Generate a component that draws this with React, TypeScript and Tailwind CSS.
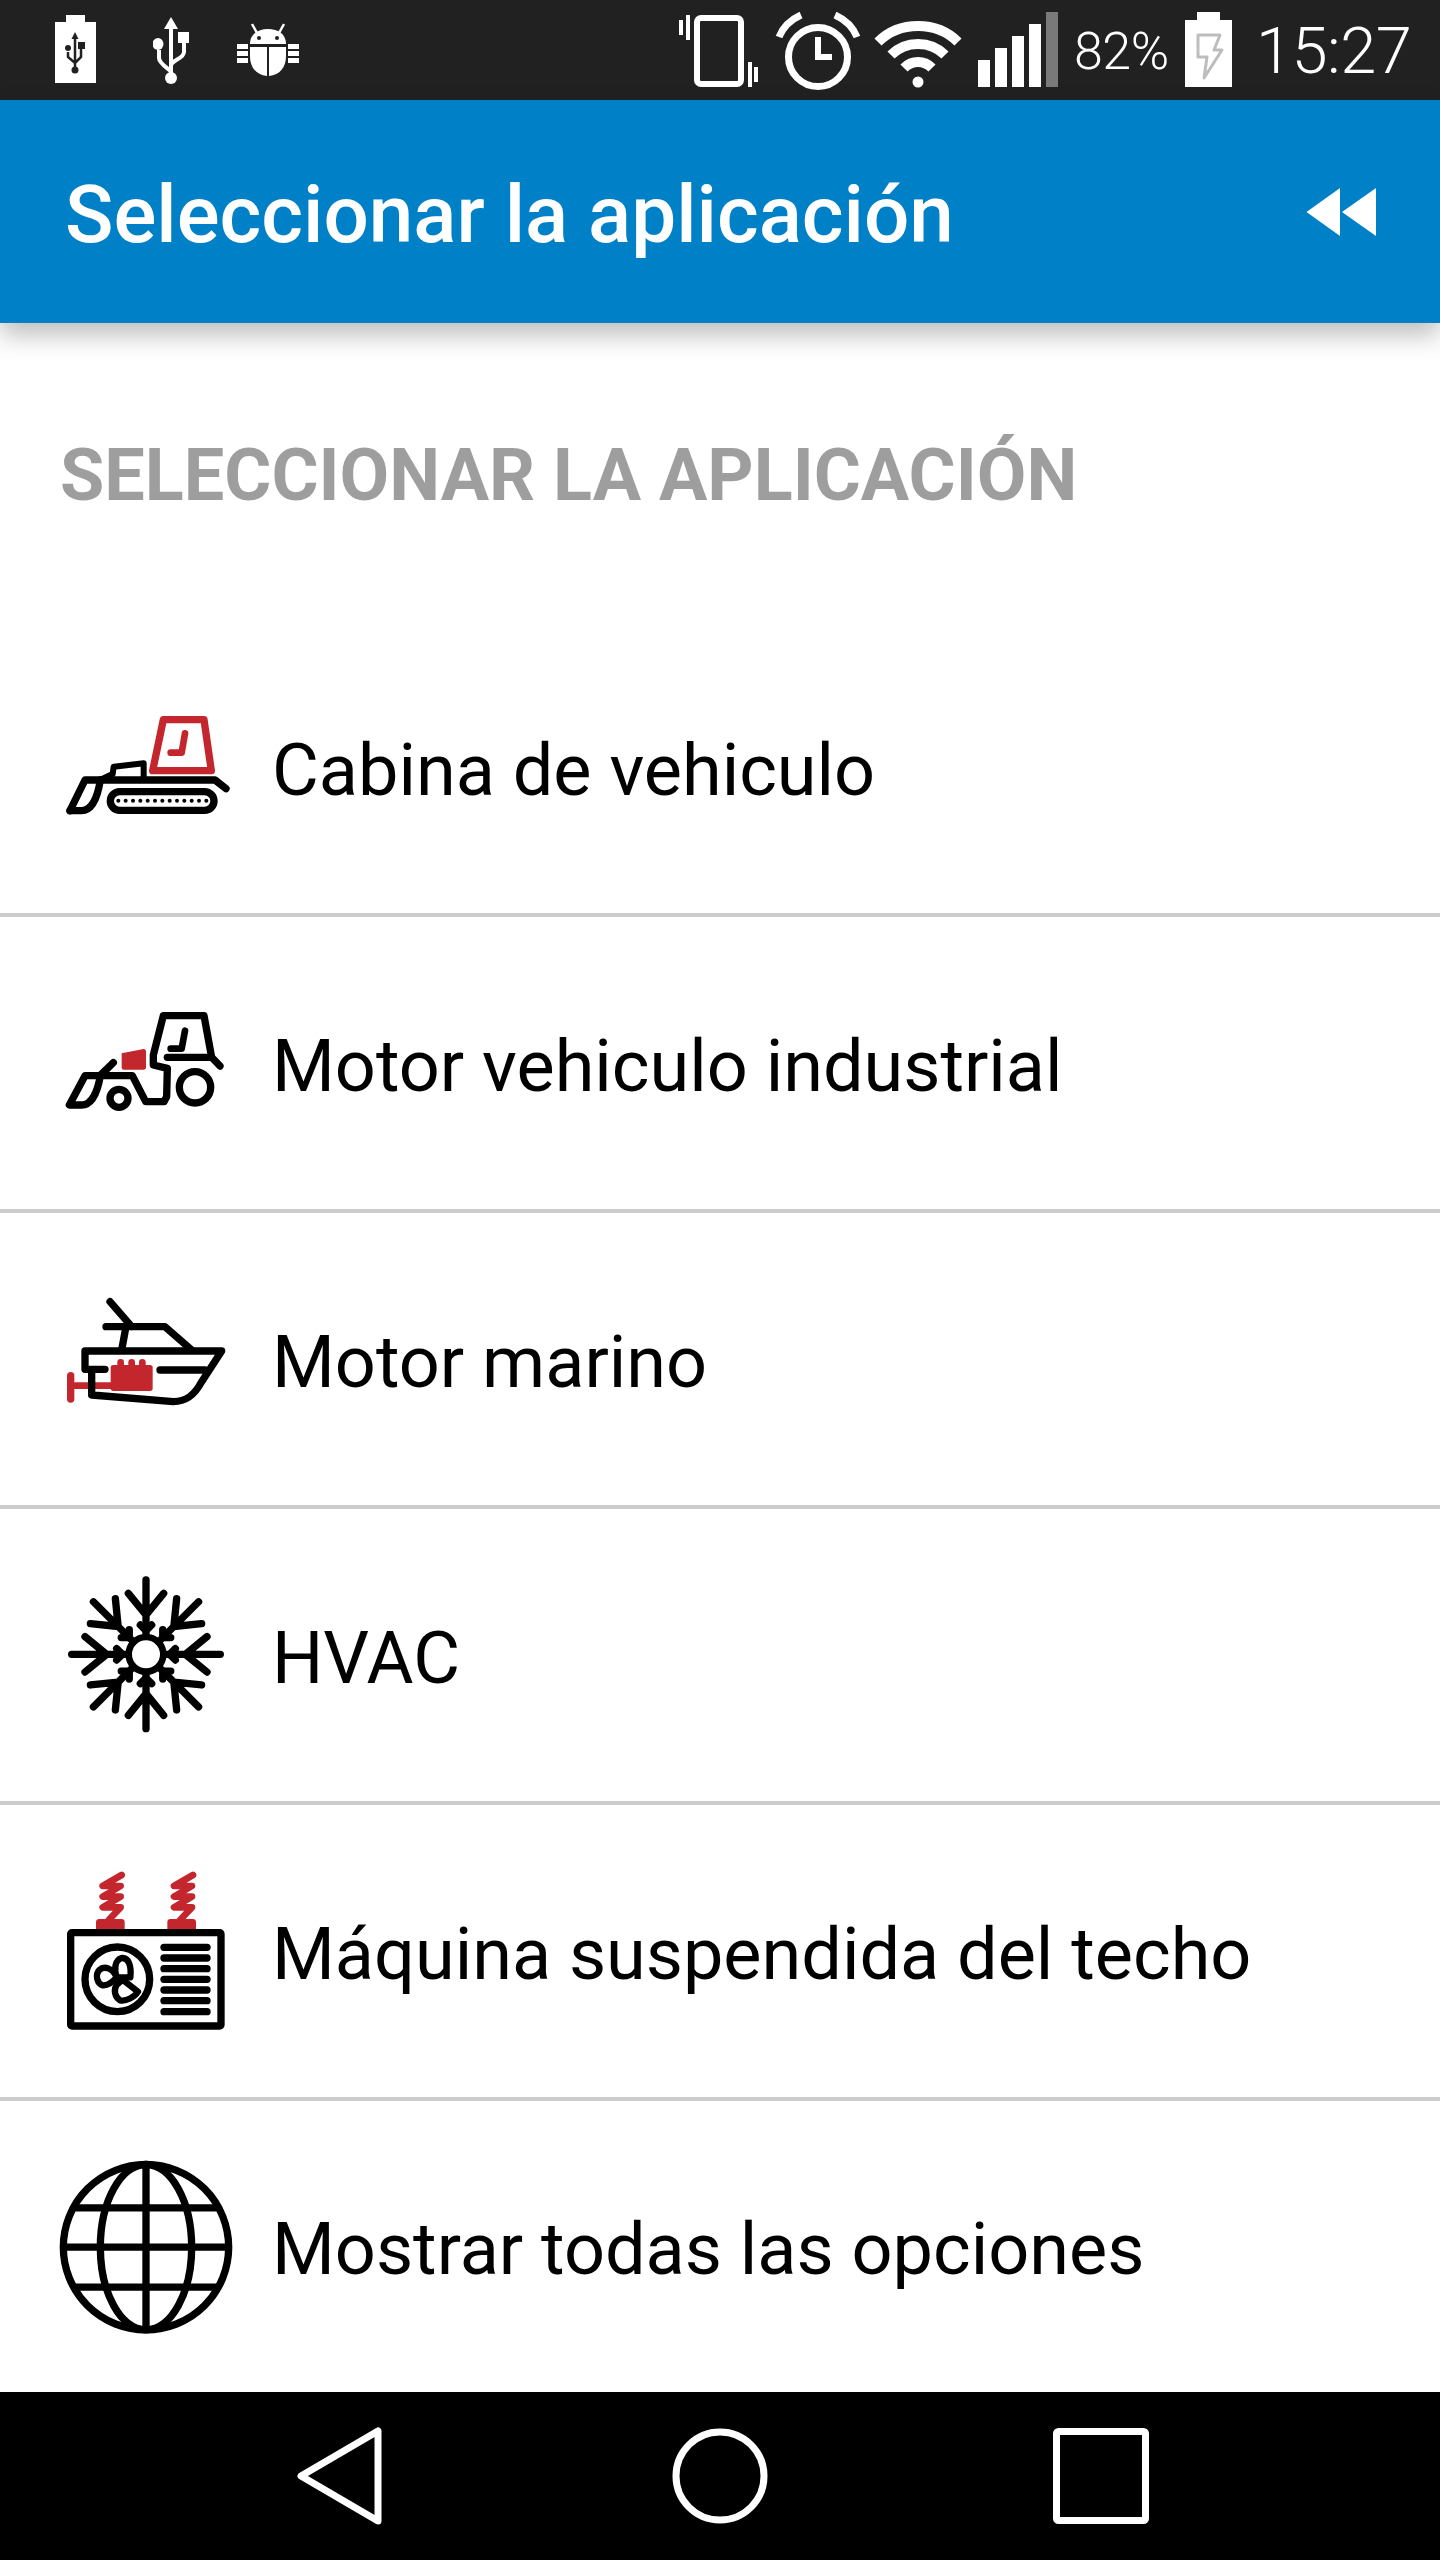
const ROBOTO = "font-['Roboto',sans-serif]";

function StatusIcon({ x, w, children }: { x: number; w: number; children: React.ReactNode }) {
  return (
    <svg width={w} height={100} viewBox={`${x} 0 ${w} 100`} className="shrink-0">
      {children}
    </svg>
  );
}

function StatusBar() {
  return (
    <div className="flex h-[100px] shrink-0 items-center justify-between bg-[#212121] pl-[55px] pr-[30px]">
      <div className="flex">
        <StatusIcon x={55} w={41}>
          <path d="M66 15h19v7h11v61H55V22h11z" fill="#fff" />
          <g fill="none" stroke="#212121" strokeWidth="2.5">
            <path d="M75 36v34M68 52v5l7 6 6-6v-8" />
          </g>
          <path d="M75 32l-3.5 7h7z" fill="#212121" />
          <circle cx="75" cy="70" r="3.5" fill="#212121" />
          <circle cx="68" cy="48" r="3" fill="#212121" />
          <rect x="78" y="42" width="7" height="7" fill="#212121" />
        </StatusIcon>
        <div className="ml-[57px]">
          <StatusIcon x={153} w={36}>
            <g fill="none" stroke="#fff" strokeWidth="4">
              <path d="M171 28v50M159 50v8c0 6 12 12 12 14M184 42v10c0 7-13 8-13 14" />
            </g>
            <path d="M171 17l-7 12h14z" fill="#fff" />
            <circle cx="171" cy="78" r="6" fill="#fff" />
            <ellipse cx="158" cy="44" rx="5.5" ry="6" fill="#fff" />
            <rect x="178" y="32" width="11" height="11" fill="#fff" />
          </StatusIcon>
        </div>
        <div className="ml-[48px]">
          <StatusIcon x={237} w={62}>
            <path d="M250 44c0-10 8-15 18-15s18 5 18 15z" fill="#fff" />
            <path d="M252 24l5 9M284 24l-5 9" stroke="#fff" strokeWidth="2.5" />
            <circle cx="259" cy="38" r="2" fill="#212121" />
            <circle cx="277" cy="38" r="2" fill="#212121" />
            <path d="M250 47h17v29c-11-1-17-9-17-20zM269 47h17v9c0 11-6 19-17 20z" fill="#fff" />
            <g fill="#fff">
              <rect x="237" y="44" width="11" height="5" />
              <rect x="237" y="51" width="11" height="5" />
              <rect x="237" y="58" width="11" height="5" />
              <rect x="288" y="44" width="11" height="5" />
              <rect x="288" y="51" width="11" height="5" />
              <rect x="288" y="58" width="11" height="5" />
            </g>
          </StatusIcon>
        </div>
      </div>
      <div className="flex items-center">
        <StatusIcon x={679} w={80}>
          <rect x="697" y="18" width="44" height="66" rx="4" fill="none" stroke="#fff" strokeWidth="6" />
          <g fill="#fff">
            <rect x="679" y="20" width="4" height="15" />
            <rect x="686" y="15" width="4" height="25" />
            <rect x="748" y="62" width="4" height="25" />
            <rect x="754" y="67" width="4" height="15" />
          </g>
        </StatusIcon>
        <div className="ml-[16px]">
          <StatusIcon x={775} w={86}>
            <circle cx="818" cy="57" r="29.5" fill="none" stroke="#fff" strokeWidth="7" />
            <path d="M818 37v20h14" fill="none" stroke="#fff" strokeWidth="6" />
            <path d="M779 37c4-10 11-17 22-22M857 37c-4-10-11-17-22-22" fill="none" stroke="#fff" strokeWidth="7" />
          </StatusIcon>
        </div>
        <div className="ml-[13px]">
          <StatusIcon x={874} w={88}>
            <g fill="none" stroke="#fff" strokeWidth="10">
              <path d="M878 42c10-10 24-16 40-16s30 6 40 16" />
              <path d="M891 55c7-7 16-11 27-11s20 4 27 11" />
              <path d="M904 68c4-4 9-6 14-6s10 2 14 6" />
            </g>
            <circle cx="918" cy="82" r="5.5" fill="#fff" />
          </StatusIcon>
        </div>
        <div className="ml-[16px]">
          <StatusIcon x={978} w={80}>
            <g fill="#fff">
              <rect x="978" y="60" width="12" height="27" />
              <rect x="995" y="48" width="12" height="39" />
              <rect x="1012" y="36" width="12" height="51" />
              <rect x="1029" y="24" width="12" height="63" />
            </g>
            <rect x="1046" y="12" width="12" height="75" fill="#7a7a7a" />
          </StatusIcon>
        </div>
        <span className={`ml-[16px] w-[92px] whitespace-nowrap pt-[3px] text-[52px] font-light leading-none tracking-[-0.5px] text-white ${ROBOTO}`}>82%</span>
        <div className="ml-[19px]">
          <StatusIcon x={1185} w={47}>
            <path d="M1197 12h23v8h12v67h-47V20h12z" fill="#fff" />
            <path d="M1198 35h22l-6 15h8l-18 28 3-21h-9z" fill="none" stroke="#bdbdbd" strokeWidth="3" strokeLinejoin="round" />
          </StatusIcon>
        </div>
        <span className={`ml-[24px] w-[154px] whitespace-nowrap pt-[3px] text-[65px] font-light leading-none tracking-[-0.5px] text-white ${ROBOTO}`}>15:27</span>
      </div>
    </div>
  );
}

function Header() {
  return (
    <header className="relative z-10 flex h-[223px] shrink-0 items-center justify-between bg-[#0080c6] pl-[65px] pr-[64px] shadow-[0_12px_24px_rgba(0,0,0,0.26)]">
      <h1 className={`pt-[6px] text-[80px] font-medium leading-none text-white ${ROBOTO}`}>Seleccionar la aplicación</h1>
      <svg width="70" height="48" viewBox="0 0 70 48" className="shrink-0">
        <path d="M34 0v48L0.5 24zM70 0v48L36 24z" fill="#fff" />
      </svg>
    </header>
  );
}

const STROKE = { fill: "none", stroke: "#000", strokeWidth: 22, strokeLinecap: "round", strokeLinejoin: "round" } as const;
const RED = "#c4262e";

function IconBox({ x = 0, y, children }: { x?: number; y: number; children: React.ReactNode }) {
  return (
    <svg width={200} height={190} viewBox={`${x} ${y} 600 570`} className="shrink-0">
      {children}
    </svg>
  );
}

function CabIcon() {
  const dots = Array.from({ length: 13 }, (_, i) => 205 + i * 22);
  return (
    <IconBox y={-84}>
      <path d="M340 59h122l22 153H308z" fill="none" stroke={RED} strokeWidth="22" strokeLinejoin="round" />
      <path d="M405 100l-10 58h-33" fill="none" stroke={RED} strokeWidth="20" strokeLinecap="round" strokeLinejoin="round" />
      <path d="M60 332l45-92h390l33 26" {...STROKE} />
      <path d="M60 332h35c30 0 48-40 56-92" {...STROKE} />
      <path d="M150 240l38-18 3-22 90-10v50" {...STROKE} strokeWidth={18} />
      <rect x="181" y="275" width="311" height="56" rx="28" {...STROKE} />
      {dots.map((cx) => (
        <circle key={cx} cx={cx} cy={302} r={6} fill="#000" />
      ))}
    </IconBox>
  );
}

function TractorIcon() {
  return (
    <IconBox y={-96}>
      <path d="M215 160l66-13c4 0 7 3 7 7v48c0 4-3 7-7 7h-60c-4 0-6-3-6-7z" fill={RED} />
      <path d="M405 92l-10 54h-33" {...STROKE} strokeWidth={20} />
      <path d="M510 198l-25-26-23-125H340l-30 118v30l42 10-2 85-8 15h-55l-40-78H105l-47 88h37c30 0 48-40 56-88" {...STROKE} />
      <path d="M152 225l38-37" {...STROKE} />
      <path d="M352 172h130" {...STROKE} />
      <circle cx="435" cy="262" r="47" {...STROKE} />
      <circle cx="207" cy="295" r="27" {...STROKE} />
    </IconBox>
  );
}

function BoatIcon() {
  return (
    <IconBox y={-63}>
      <g fill={RED}>
        <rect x="182" y="240" width="126" height="78" rx="8" />
        <rect x="202" y="222" width="20" height="40" rx="10" />
        <rect x="235" y="222" width="20" height="40" rx="10" />
        <rect x="267" y="222" width="20" height="40" rx="10" />
      </g>
      <path d="M60 302h125" fill="none" stroke={RED} strokeWidth="20" />
      <path d="M62 272v70" fill="none" stroke={RED} strokeWidth="22" strokeLinecap="round" />
      <path d="M180 50l65 75M168 125h177l80 70M228 125l-13 70" {...STROKE} />
      <path d="M165 253h-60v-55h410l-60 92c-22 42-48 60-85 60l-245-20v-77" {...STROKE} />
      <path d="M330 255h135" {...STROKE} />
    </IconBox>
  );
}

function SnowIcon() {
  return (
    <IconBox y={0}>
      <circle cx="288" cy="283" r="52" fill="none" stroke="#000" strokeWidth="20" />
      {[0, 45, 90, 135, 180, 225, 270, 315].map((a) => (
        <g key={a} transform={`rotate(${a} 288 283)`}>
          <path d="M288 60v160M235 100l53 65 53-65" {...STROKE} />
          <path d="M271 195l17 17 17-17" {...STROKE} />
        </g>
      ))}
    </IconBox>
  );
}

function UnitIcon() {
  const vents = [262, 294, 326, 358, 390, 422, 455];
  return (
    <IconBox y={-12}>
      {[0, 214].map((dx) => (
        <g key={dx} transform={`translate(${dx} 0)`}>
          <path d="M138 208v-22c0-5 4-9 9-9h68c5 0 9 4 9 9v22z" fill={RED} />
          <path d="M215 45l-57 33h54l-54 32h54l-54 32h54l-36 38" fill="none" stroke={RED} strokeWidth="20" strokeLinecap="round" strokeLinejoin="round" />
        </g>
      ))}
      <rect x="62" y="218" width="451" height="280" rx="4" fill="none" stroke="#000" strokeWidth="22" />
      <circle cx="202" cy="358" r="97" fill="none" stroke="#000" strokeWidth="22" />
      <g fill="none" stroke="#000" strokeWidth="19" strokeLinejoin="round">
        <path d="M200 352c-12-28-38-36-52-22-14 15-6 42 10 46 18 2 32-12 42-24z" />
        <path d="M200 352c-8-25-6-52 15-58 20-2 30 22 26 58z" />
        <path d="M200 375c-10 14-6 36 10 46 18 4 44-10 54-26l-46-36z" />
      </g>
      {vents.map((y) => (
        <path key={y} d={`M342 ${y}h129`} fill="none" stroke="#000" strokeWidth="22" strokeLinecap="round" />
      ))}
    </IconBox>
  );
}

function GlobeIcon() {
  return (
    <IconBox x={30} y={4.5}>
      <g fill="none" stroke="#000" strokeWidth="22">
        <circle cx="318" cy="290" r="248" />
        <ellipse cx="318" cy="290" rx="137" ry="248" />
        <path d="M318 42v496M70 290h496M100 172h436M100 410h436" />
      </g>
    </IconBox>
  );
}

const rows = [
  { icon: CabIcon, label: "Cabina de vehiculo" },
  { icon: TractorIcon, label: "Motor vehiculo industrial" },
  { icon: BoatIcon, label: "Motor marino" },
  { icon: SnowIcon, label: "HVAC" },
  { icon: UnitIcon, label: "Máquina suspendida del techo" },
  { icon: GlobeIcon, label: "Mostrar todas las opciones" },
];

function NavBar() {
  return (
    <nav className="flex h-[168px] shrink-0 items-center bg-black">
      <div className="flex w-[672px] pl-[294px]">
        <svg width="90" height="100" viewBox="0 0 90 100">
          <path d="M84 5v90L7 50z" fill="none" stroke="#fff" strokeWidth="7" strokeLinejoin="round" />
        </svg>
      </div>
      <svg width="96" height="96" viewBox="0 0 96 96">
        <circle cx="48" cy="48" r="44" fill="none" stroke="#fff" strokeWidth="7" />
      </svg>
      <div className="ml-[285px]">
        <svg width="96" height="96" viewBox="0 0 96 96">
          <rect x="3.5" y="3.5" width="89" height="89" rx="2" fill="none" stroke="#fff" strokeWidth="7" />
        </svg>
      </div>
    </nav>
  );
}

export default function App() {
  return (
    <div className="flex h-[2560px] w-[1440px] flex-col overflow-hidden bg-white">
      <StatusBar />
      <Header />
      <main className="flex min-h-0 flex-1 flex-col">
        <h2 className={`flex h-[298px] shrink-0 items-center pl-[60px] pt-[7px] text-[72px] font-bold leading-none text-[#9e9e9e] ${ROBOTO}`}>
          SELECCIONAR LA APLICACIÓN
        </h2>
        {rows.map(({ icon: Icon, label }, i) => (
          <div
            key={label}
            className={`flex shrink-0 items-center pl-[50px] ${i === rows.length - 1 ? "h-[291px]" : "h-[296px] border-b-[4px] border-[#cccccc]"}`}
          >
            <Icon />
            <span className={`ml-[22px] pt-[7px] text-[72px] font-normal leading-none text-black ${ROBOTO}`}>{label}</span>
          </div>
        ))}
      </main>
      <NavBar />
    </div>
  );
}
